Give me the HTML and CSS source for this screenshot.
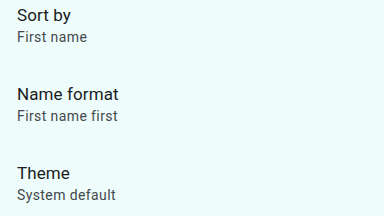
FILE: index.html
```html
<!DOCTYPE html>
<html lang="en">
    <head>
        <meta charset="UTF-8" />
        <meta name="viewport" content="width=device-width, initial-scale=1.0" />
        <title>Settings</title>
        <link rel="stylesheet" href="styles.css">
    </head>
    <body>
        <div class="settings-list">
            <div class="setting-item">
                <div class="setting-title">Sort by</div>
                <div class="setting-value">First name</div>
            </div>
            <div class="setting-item">
                <div class="setting-title">Name format</div>
                <div class="setting-value">First name first</div>
            </div>
            <div class="setting-item">
                <div class="setting-title">Theme</div>
                <div class="setting-value">System default</div>
            </div>
        </div>
    </body>
</html>
```

FILE: styles.css
```css
body {
    font-family: Roboto, "Noto Sans", sans-serif;
    background-color: #eefcfc;
    margin: 0;
    padding: 0;
}
.settings-list {
    display: flex;
    flex-direction: column;
    gap: 35px;
    padding-top: 3px;
}
.setting-item {
    padding: 0 17px;
}
.setting-title {
    font-size: 17px;
    line-height: 24px;
    letter-spacing: 0.1px;
    color: #191c1d;
}
.setting-value {
    font-size: 14px;
    line-height: 20px;
    letter-spacing: 0.4px;
    color: #44494b;
}
```
